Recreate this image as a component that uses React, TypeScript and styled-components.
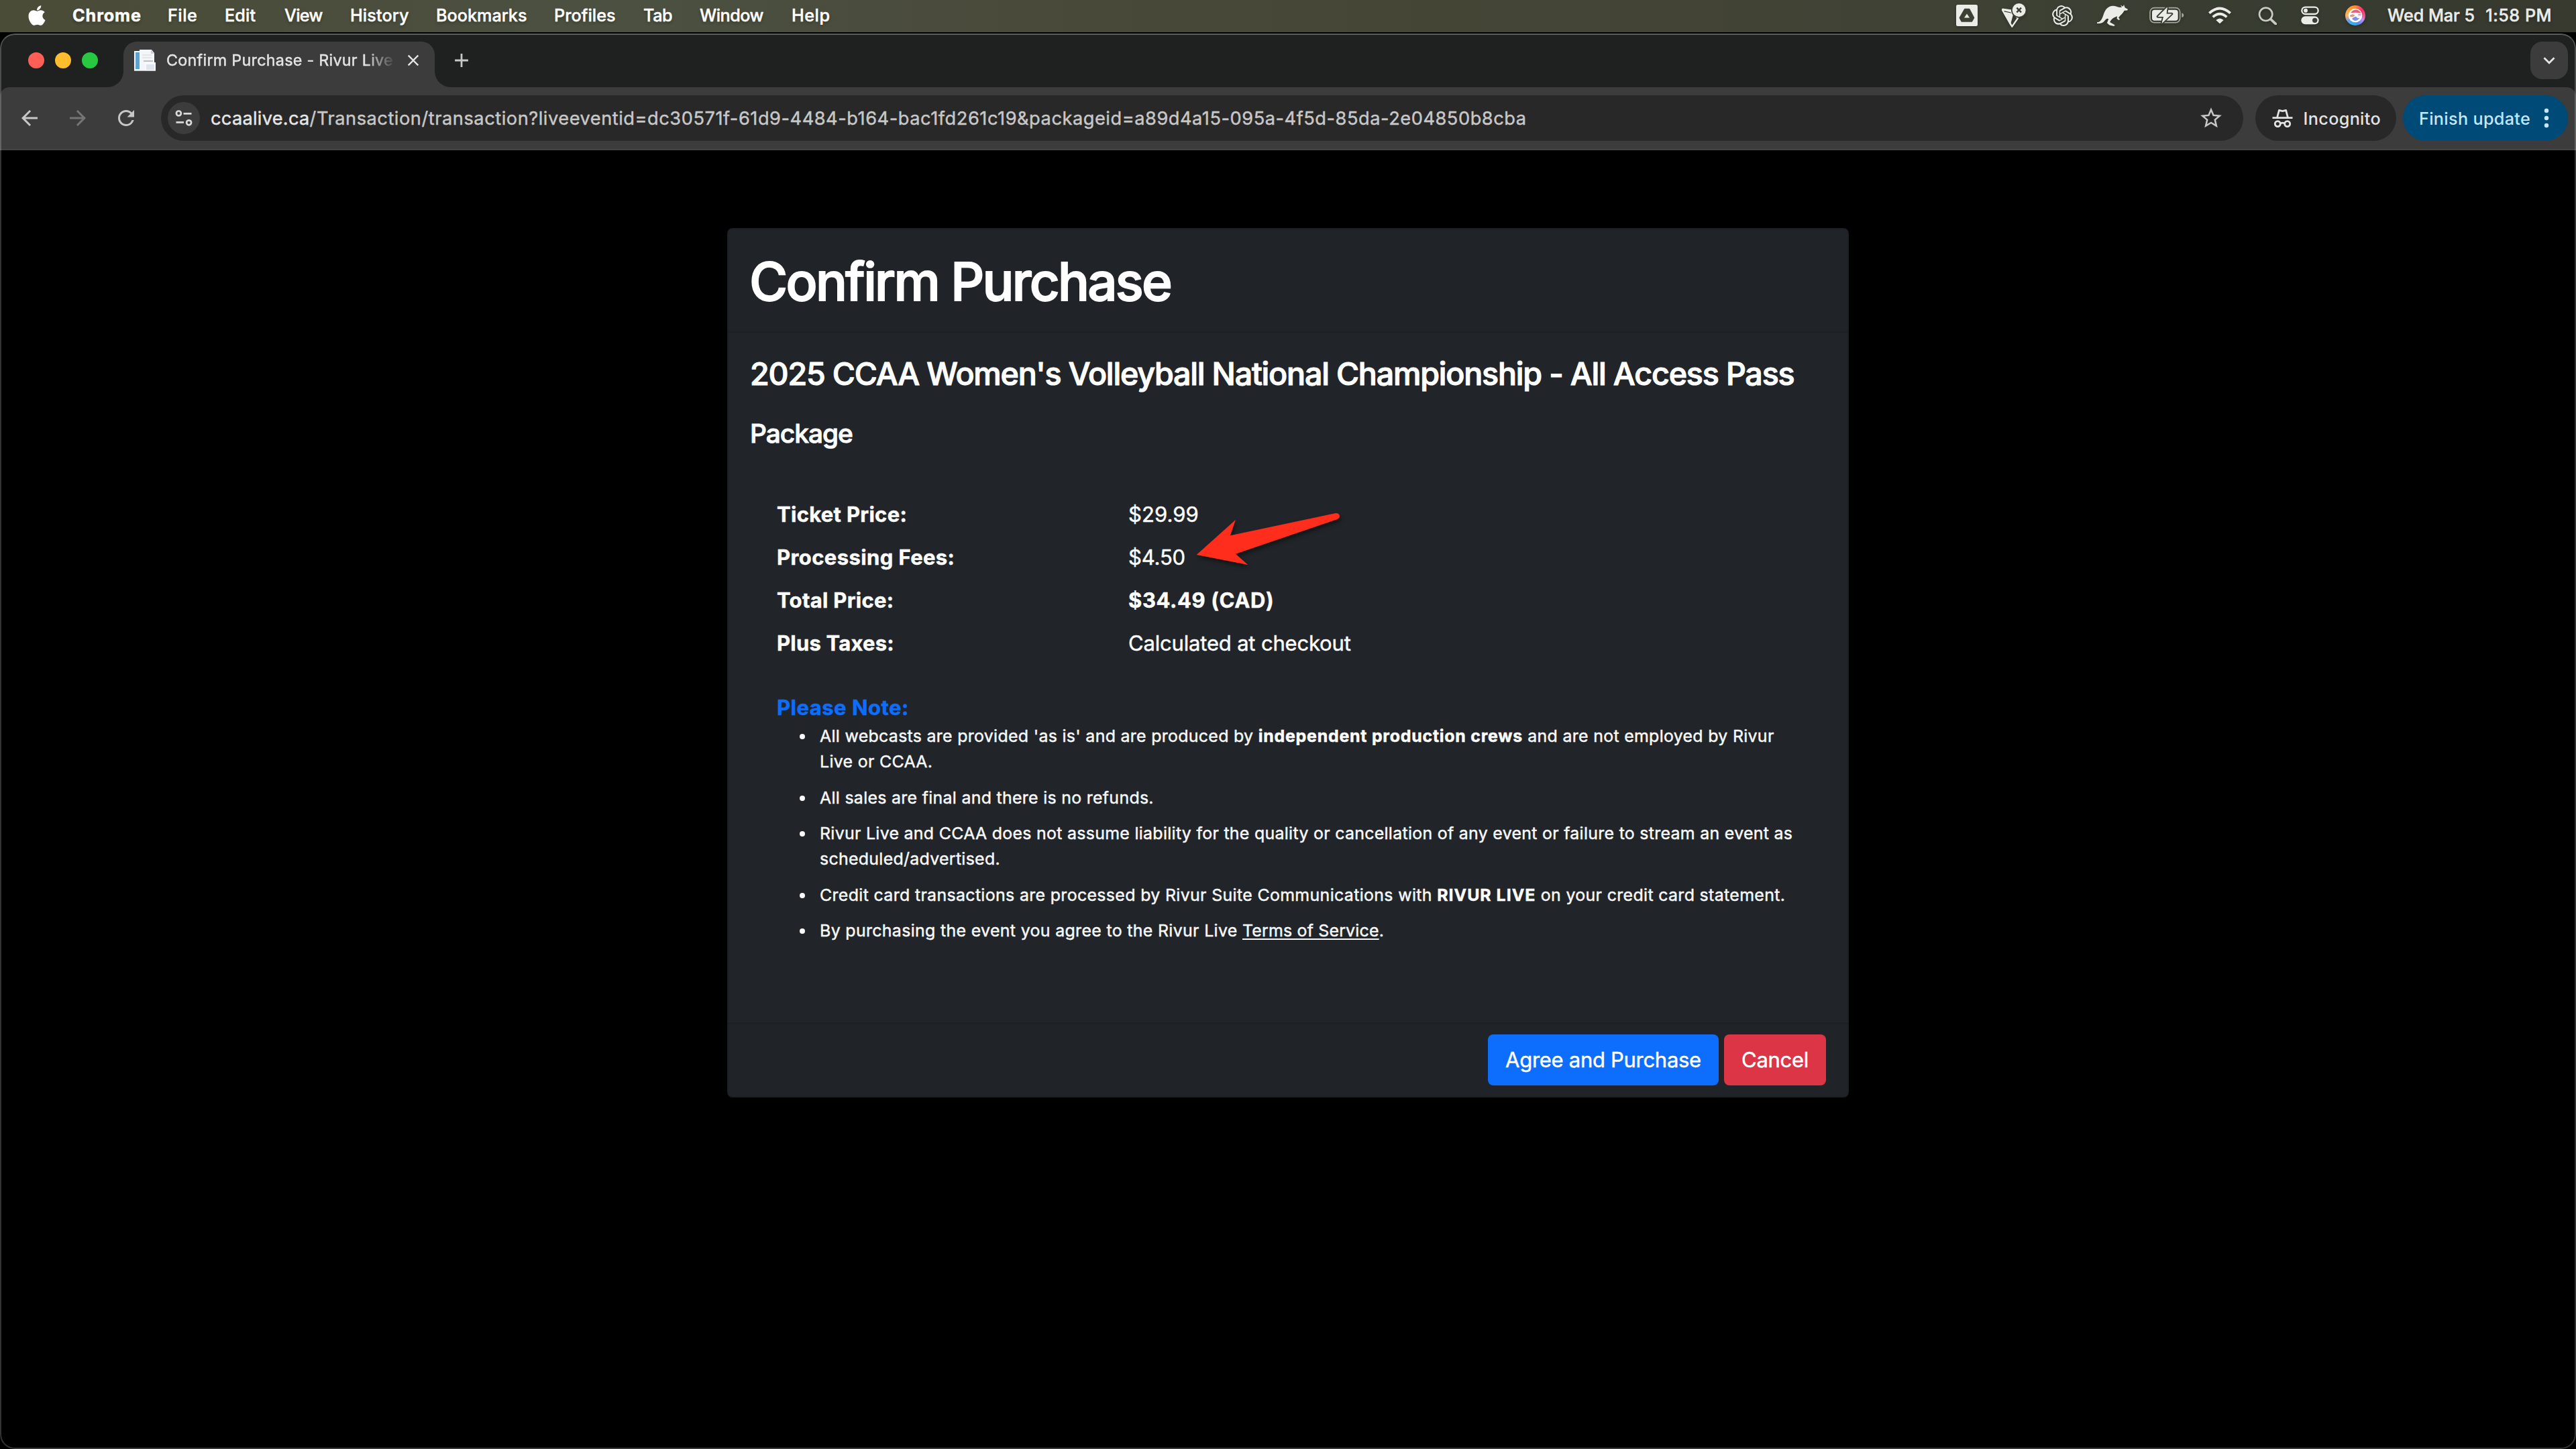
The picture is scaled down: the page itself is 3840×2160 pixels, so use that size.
import React from 'react';
import styled, { createGlobalStyle } from 'styled-components';
import { FaApple } from 'react-icons/fa';
import { SiOpenai } from 'react-icons/si';
import {
  MdAdd,
  MdArrowBack,
  MdArrowForward,
  MdClose,
  MdKeyboardArrowDown,
  MdRefresh,
  MdStarBorder,
} from 'react-icons/md';

const GlobalStyle = createGlobalStyle`
  *, *::before, *::after { box-sizing: border-box; }
  body {
    margin: 0;
    background: #000;
    color: #fff;
    font-family: Inter, "Liberation Sans", sans-serif;
    -webkit-font-smoothing: antialiased;
    -webkit-text-stroke: 0.45px currentColor;
  }
  svg { display: block; flex: none; }
`;

const Screen = styled.div`
  width: 3840px;
  height: 2160px;
  display: flex;
  flex-direction: column;
  background: #000;
  overflow: hidden;
`;

/* ---------- macOS menu bar ---------- */

const MenuBar = styled.header`
  flex: none;
  height: 48px;
  padding: 0 36px 2px 38px;
  display: flex;
  align-items: center;
  justify-content: space-between;
  background: linear-gradient(90deg, #4a4c38 0, #4b4e3d 600px, #4b5142 900px, #4a4a3b 1500px, #454536 2200px, #3f4235 2900px, #373c30 3400px, #38392f 3840px);
  font-size: 25.2px;
  font-weight: 500;
  line-height: 46px;
  color: #fff;
  text-shadow: 0 2px 4px rgba(0, 0, 0, 0.35);
`;

const MenuList = styled.nav`
  display: grid;
  grid-template-columns: 70px 142px 85px 89px 98px 128px 176px 133px 84px 137px auto;
  align-items: center;
  white-space: nowrap;
`;

const MenuItem = styled.span<{ $track?: number; $bold?: boolean }>`
  letter-spacing: ${(p) => p.$track ?? 0}px;
  font-weight: ${(p) => (p.$bold ? 700 : 500)};
`;

const StatusList = styled.div`
  display: flex;
  align-items: center;
  height: 46px;
  color: #ebebe8;
  white-space: nowrap;
`;

const StatusSlot = styled.span<{ $w: number; $gap: number }>`
  width: ${(p) => p.$w}px;
  margin-left: ${(p) => p.$gap}px;
  display: flex;
  justify-content: center;
  filter: drop-shadow(0 2px 2px rgba(0, 0, 0, 0.25));
`;

const Clock = styled.span`
  width: 245px;
  margin-left: 33px;
  display: flex;
  justify-content: space-between;
`;

/* ---------- browser window ---------- */

const Window = styled.div`
  position: relative;
  flex: 1;
  margin-top: 2px;
  display: flex;
  flex-direction: column;
  border-radius: 22px;
  overflow: hidden;
  background: #1f2120;
  &::after {
    content: '';
    position: absolute;
    inset: 0;
    border: 2px solid rgba(255, 255, 255, 0.27);
    border-left-color: rgba(255, 255, 255, 0.2);
    border-right-color: rgba(255, 255, 255, 0.2);
    border-bottom-color: rgba(255, 255, 255, 0.22);
    border-radius: 22px;
    pointer-events: none;
  }
`;

const TabStrip = styled.div`
  flex: none;
  height: 80px;
  padding: 0 12px 0 42px;
  display: flex;
  align-items: center;
`;

const Lights = styled.div`
  display: flex;
  gap: 16px;
`;

const Light = styled.i<{ $color: string }>`
  width: 24px;
  height: 24px;
  border-radius: 50%;
  background: ${(p) => p.$color};
`;

const Tab = styled.div`
  position: relative;
  align-self: flex-end;
  width: 464px;
  height: 68px;
  margin-left: 38px;
  padding: 0 18px 12px 16px;
  display: flex;
  align-items: center;
  background: #3c3c3c;
  border-radius: 20px 20px 0 0;
  &::before,
  &::after {
    content: '';
    position: absolute;
    bottom: 0;
    width: 24px;
    height: 24px;
  }
  &::before {
    left: -24px;
    background: radial-gradient(circle at 0 0, transparent 23.5px, #3c3c3c 24.5px);
  }
  &::after {
    right: -24px;
    background: radial-gradient(circle at 100% 0, transparent 23.5px, #3c3c3c 24.5px);
  }
`;

const TabTitle = styled.span`
  width: 337px;
  margin-left: 16px;
  overflow: hidden;
  white-space: nowrap;
  font-size: 23.3px;
  line-height: 56px;
  letter-spacing: 0.275px;
  color: #e3e3e3;
  mask-image: linear-gradient(90deg, #000 296px, transparent 342px);
`;

const TabClose = styled.span`
  margin-left: auto;
  color: #e3e3e3;
`;

const NewTab = styled.span`
  margin-left: 23px;
  color: #c7c7c7;
`;

const TabSearch = styled.span`
  margin-left: auto;
  width: 56px;
  height: 56px;
  border-radius: 18px;
  background: #3c3c3c;
  color: #e3e3e3;
  display: flex;
  align-items: center;
  justify-content: center;
`;

const Toolbar = styled.div`
  flex: none;
  height: 94px;
  padding: 0 12px 0 26px;
  display: flex;
  align-items: center;
  background: #3c3c3c;
  border-bottom: 2px solid #454545;
  border-radius: 14px 14px 0 0;
`;

const NavButtons = styled.div`
  display: flex;
  gap: 36px;
  color: #c7c7c7;
`;

const NavButton = styled.span<{ $dim?: boolean }>`
  color: ${(p) => (p.$dim ? '#757575' : '#c7c7c7')};
`;

const Omnibox = styled.div`
  flex: none;
  width: 3104px;
  height: 68px;
  margin-left: 34px;
  padding: 0 29px 0 10px;
  display: flex;
  align-items: center;
  border-radius: 34px;
  background: #282828;
`;

const SiteInfo = styled.span`
  width: 48px;
  height: 48px;
  border-radius: 50%;
  background: #3c3c3c;
  display: flex;
  align-items: center;
  justify-content: center;
`;

const Url = styled.span`
  margin-left: 16px;
  flex: 1;
  font-size: 27.2px;
  letter-spacing: 0.545px;
  white-space: nowrap;
  color: #c7c7c7;
`;

const Host = styled.span`
  letter-spacing: 0.274px;
  color: #e6e6e6;
`;

const Chip = styled.span<{ $bg: string; $fg: string; $w: number; $gap: number; $left: number; $right: number }>`
  flex: none;
  width: ${(p) => p.$w}px;
  height: 68px;
  margin-left: ${(p) => p.$gap}px;
  padding: 0 ${(p) => p.$right}px 0 ${(p) => p.$left}px;
  display: flex;
  align-items: center;
  justify-content: space-between;
  border-radius: 34px;
  background: ${(p) => p.$bg};
  color: ${(p) => p.$fg};
  font-size: 25.2px;
  font-weight: 500;
  letter-spacing: 0.33px;
  line-height: 68px;
  white-space: nowrap;
  -webkit-text-stroke: 0;
`;

const ChipLabel = styled.span`
  padding-top: 1px;
`;

/* ---------- page ---------- */

const Page = styled.main`
  flex: 1;
  padding-top: 116px;
  display: flex;
  justify-content: center;
  align-items: flex-start;
  background: #000;
`;

const Card = styled.section`
  width: 1672px;
  height: 1296px;
  display: flex;
  flex-direction: column;
  background: #212529;
  border: 2px solid #1d2023;
  border-radius: 8px;
`;

const CardHeader = styled.div`
  flex: none;
  height: 154px;
  padding: 30px 31px 0;
  background: #202428;
  border-bottom: 2px solid #1d2023;
  border-radius: 6px 6px 0 0;
`;

const CardBody = styled.div`
  flex: 1;
  padding: 32px 31px 0 32px;
`;

const CardFooter = styled.div`
  flex: none;
  height: 110px;
  padding: 16px 32px 0;
  display: flex;
  justify-content: flex-end;
  gap: 8px;
  background: #202428;
  border-top: 2px solid #1d2023;
  border-radius: 0 0 6px 6px;
`;

const Title = styled.h1`
  margin: 0;
  font-size: 78px;
  font-weight: 500;
  line-height: 96px;
  letter-spacing: -2.72px;
  -webkit-text-stroke-width: 1.8px;
`;

const EventName = styled.h4`
  margin: 0 0 36px;
  font-size: 46.6px;
  font-weight: 500;
  line-height: 58px;
  letter-spacing: -1.2px;
  white-space: nowrap;
  -webkit-text-stroke-width: 1.1px;
`;

const PackageName = styled.h5`
  margin: 0 0 65px;
  font-size: 38.8px;
  font-weight: 500;
  line-height: 48px;
  letter-spacing: -0.98px;
  -webkit-text-stroke-width: 0.9px;
`;

const Details = styled.div`
  padding-left: 40px;
  font-size: 31px;
`;

const PriceRow = styled.div`
  display: grid;
  grid-template-columns: 524px 1fr;
  line-height: 64px;
`;

const PriceLabel = styled.span<{ $track: number }>`
  font-weight: 700;
  letter-spacing: ${(p) => p.$track}px;
`;

const PriceValue = styled.span<{ $bold?: boolean; $track: number }>`
  font-weight: ${(p) => (p.$bold ? 700 : 400)};
  letter-spacing: ${(p) => p.$track}px;
`;

const NoteHeading = styled.div`
  margin-top: 40px;
  font-weight: 700;
  line-height: 47px;
  letter-spacing: 0.5px;
  color: #0d6efd;
`;

const Notes = styled.ul`
  margin: 0;
  padding: 0;
  list-style: none;
  font-size: 24.9px;
  line-height: 38.4px;
  color: #f8f9fa;
`;

const Note = styled.li<{ $track?: number }>`
  display: flex;
  margin-bottom: 14.9px;
  padding-left: 34px;
  letter-spacing: ${(p) => p.$track ?? 0.3}px;
  &::before {
    content: '';
    flex: none;
    width: 8px;
    height: 8px;
    margin: 16px 22px 0 0;
    border-radius: 50%;
    background: #f8f9fa;
  }
`;

const NoteText = styled.span`
  width: 1462px;
`;

const Strong = styled.b<{ $track: number }>`
  font-weight: 700;
  letter-spacing: ${(p) => p.$track}px;
  color: #fff;
`;

const TermsLink = styled.a`
  letter-spacing: 0.2px;
  text-decoration: underline;
  text-decoration-thickness: 2px;
  text-underline-offset: 3px;
  text-decoration-skip-ink: none;
`;

const Button = styled.button<{ $bg: string; $w: number }>`
  width: ${(p) => p.$w}px;
  height: 76px;
  padding: 0;
  border: 0;
  border-radius: 8px;
  background: ${(p) => p.$bg};
  color: #fff;
  font: 400 31px/76px Inter, 'Liberation Sans', sans-serif;
  letter-spacing: -0.29px;
  text-align: center;
  white-space: nowrap;
`;

const ArrowAnchor = styled.span`
  position: relative;
`;

const ArrowMark = styled.svg`
  position: absolute;
  left: 88px;
  top: -59px;
  overflow: visible;
  filter: drop-shadow(2px 4px 3px rgba(0, 0, 0, 0.45));
`;

/* ---------- icons ---------- */

const DriveIcon = () => (
  <svg width="32" height="32" viewBox="0 0 32 32">
    <rect width="32" height="32" rx="2.5" fill="#ebebe8" />
    <path d="M13 7h6.4L26 19.5 23.2 24.5H8.4L5.8 19.5Z" fill="#3d4034" stroke="#3d4034" strokeWidth="2.4" strokeLinejoin="round" />
    <path d="M16 13.6l4 6h-8Z" fill="#ebebe8" />
  </svg>
);

const PointerOffIcon = () => (
  <svg width="36" height="36" viewBox="0 0 108 108">
    <path d="M2 28L40 36L72 66L46 104Z" fill="none" stroke="#ebebe8" strokeWidth="7" strokeLinejoin="round" />
    <path d="M4 36L52 46L38 98Z" fill="#ebebe8" />
    <path d="M2 26L46 32" stroke="#ebebe8" strokeWidth="7" />
    <circle cx="77" cy="30" r="35" fill="#3d4034" />
    <circle cx="77" cy="30" r="30" fill="#ebebe8" />
    <path d="M67 20l20 20M87 20L67 40" stroke="#3d4034" strokeWidth="7.5" />
  </svg>
);

const KangarooIcon = () => (
  <svg width="46" height="32" viewBox="0 0 139 96">
    <path
      fill="#ebebe8"
      d="M0 79C14 80 22 66 28 48C36 20 50 6 72 5C84 5 93 11 102 12L112 11L105 1L117 8L121 0L126 13L139 20L136 25L123 26C118 36 112 42 106 47L97 58L103 66L98 69L89 62L91 52L80 56C70 60 62 68 58 78L80 91L77 96L56 92L45 82L52 64C46 60 42 62 36 70C27 82 16 86 0 84Z"
    />
  </svg>
);

const BatteryIcon = () => (
  <svg width="52" height="26" viewBox="0 0 156 78">
    <rect x="3" y="5" width="134" height="66" rx="19" fill="none" stroke="#a8a9a0" strokeWidth="5" />
    <path d="M145 28v20q9-3 9-10t-9-10Z" fill="#a8a9a0" />
    <rect x="12" y="14" width="116" height="48" rx="11" fill="#ebebe8" />
    <path d="M80 2L38 44h26L56 74l44-42H76Z" fill="#ebebe8" stroke="#3b4033" strokeWidth="12" strokeLinejoin="round" paintOrder="stroke" />
    <path d="M80 2L38 44h26L56 74l44-42H76Z" fill="#ebebe8" />
  </svg>
);

const WifiIcon = () => (
  <svg width="34" height="26" viewBox="0 0 102 78" fill="none" stroke="#ebebe8" strokeWidth="11.5">
    <path d="M4 29Q51-14 98 29" />
    <path d="M20 46Q51 18 82 46" />
    <path d="M51 76L34 60Q51 45 68 60Z" fill="#ebebe8" stroke="none" />
  </svg>
);

const SearchIcon = () => (
  <svg width="28" height="28" viewBox="0 0 84 84" fill="none" stroke="#c9cac4">
    <circle cx="35" cy="37" r="29" strokeWidth="8" />
    <path d="M56 58L79 80" strokeWidth="11" strokeLinecap="round" />
  </svg>
);

const ControlCenterIcon = () => (
  <svg width="27" height="28" viewBox="0 0 81 84">
    <rect x="4" y="5" width="73" height="31" rx="15.5" fill="none" stroke="#ebebe8" strokeWidth="7" />
    <circle cx="21" cy="20.5" r="9" fill="#ebebe8" />
    <rect x="1" y="46" width="79" height="36" rx="18" fill="#ebebe8" />
    <circle cx="62" cy="64" r="11" fill="#3a3f33" />
  </svg>
);

const Orb = styled.span`
  width: 30px;
  height: 30px;
  border-radius: 50%;
  background: conic-gradient(#ff8a3d, #ff2d6b 50deg, #f0508c 90deg, #c48cff 120deg, #4f8cf0 160deg, #28b4f5 200deg, #7c9be0 235deg, #ffb46a 270deg, #ffa02e 320deg, #ff8a3d);
`;

const AssistantIcon = () => (
  <Orb>
    <svg width="30" height="30" viewBox="0 0 90 90">
      <circle cx="45" cy="45" r="31" fill="#fff" />
      <path d="M24 34Q34 17 54 20Q68 26 70 36Q50 30 24 34Z" fill="#e8607c" />
      <path d="M21 44Q30 34 44 44Q34 56 22 50Z" fill="#d99a86" />
      <path d="M30 60Q44 44 66 52Q60 68 44 69Q36 68 30 60Z" fill="#7f92e8" />
      <path d="M22 40Q46 30 50 45T70 50" fill="none" stroke="#fff" strokeWidth="6" />
      <path d="M58 42h13" stroke="#f07ac0" strokeWidth="5" />
    </svg>
  </Orb>
);

const Favicon = () => (
  <svg width="32" height="32" viewBox="0 0 32 32">
    <rect x="0" y="2" width="22" height="29" fill="#f4f8fb" />
    <rect x="2" y="4" width="6" height="25" fill="#5ba3d3" />
    <path d="M8 0H26L30 5V31H8Z" fill="#f3f5f9" />
    <path d="M25 0L30 6H25Z" fill="#c9ced6" />
    <path d="M12 8h14M12 12h14" stroke="#dde2ea" strokeWidth="1.6" />
    <path d="M14 17h14" stroke="#a9adb4" strokeWidth="1.6" />
    <rect x="16" y="19" width="16" height="13" fill="#f8f9fc" />
    <rect x="18" y="22" width="12" height="8" fill="#dfe4f0" />
    <path d="M0 31.5H32" stroke="#b7bcc4" strokeWidth="1" />
  </svg>
);

const TuneIcon = () => (
  <svg width="26" height="26" viewBox="0 0 26 26" fill="none" stroke="#dadada" strokeWidth="2.7">
    <circle cx="5.4" cy="6" r="3.5" />
    <path d="M12.5 6.4H24.5M1.5 19.4H13" />
    <circle cx="20.6" cy="19.8" r="3.5" />
  </svg>
);

const IncognitoIcon = () => (
  <svg width="31" height="29" viewBox="0 0 31 29" fill="none" stroke="#e3e3e3" strokeWidth="2.8">
    <path d="M7.6 13L10.4 2.4L15.5 3.6L20.6 2.4L23.4 13" strokeLinejoin="round" />
    <path d="M0.5 13.6H30.5" />
    <circle cx="8.3" cy="22.6" r="4" />
    <circle cx="22.7" cy="22.6" r="4" />
    <path d="M12.3 22Q15.5 20.2 18.7 22" />
  </svg>
);

const DotsIcon = () => (
  <svg width="8" height="30" viewBox="0 0 8 30" fill="#c2e7ff">
    <circle cx="4" cy="4" r="3.2" />
    <circle cx="4" cy="15" r="3.2" />
    <circle cx="4" cy="26" r="3.2" />
  </svg>
);

/* ---------- data ---------- */

const menus: { label: string; track: number; bold?: boolean }[] = [
  { label: 'Chrome', track: 0.92, bold: true },
  { label: 'File', track: 0.49 },
  { label: 'Edit', track: 0.13 },
  { label: 'View', track: -0.69 },
  { label: 'History', track: 0.11 },
  { label: 'Bookmarks', track: 0 },
  { label: 'Profiles', track: 0.04 },
  { label: 'Tab', track: -0.45 },
  { label: 'Window', track: -0.52 },
  { label: 'Help', track: 0.53 },
];

const prices: {
  label: string;
  labelTrack: number;
  value: string;
  track: number;
  bold?: boolean;
  marked?: boolean;
}[] = [
  { label: 'Ticket Price:', labelTrack: 0.3, value: '$29.99', track: 0.05 },
  { label: 'Processing Fees:', labelTrack: 0.4, value: '$4.50', track: -0.15, marked: true },
  { label: 'Total Price:', labelTrack: 0.3, value: '$34.49 (CAD)', track: 0.6, bold: true },
  { label: 'Plus Taxes:', labelTrack: 0.22, value: 'Calculated at checkout', track: -0.18 },
];

export default function App() {
  return (
    <Screen>
      <GlobalStyle />
      <MenuBar>
        <MenuList>
          <FaApple size={34} />
          {menus.map((m) => (
            <MenuItem key={m.label} $track={m.track} $bold={m.bold}>
              {m.label}
            </MenuItem>
          ))}
        </MenuList>
        <StatusList>
          <StatusSlot $w={32} $gap={0}><DriveIcon /></StatusSlot>
          <StatusSlot $w={36} $gap={36}><PointerOffIcon /></StatusSlot>
          <StatusSlot $w={31} $gap={39}><SiOpenai size={31} /></StatusSlot>
          <StatusSlot $w={46} $gap={36}><KangarooIcon /></StatusSlot>
          <StatusSlot $w={52} $gap={32}><BatteryIcon /></StatusSlot>
          <StatusSlot $w={34} $gap={36}><WifiIcon /></StatusSlot>
          <StatusSlot $w={28} $gap={40}><SearchIcon /></StatusSlot>
          <StatusSlot $w={27} $gap={36}><ControlCenterIcon /></StatusSlot>
          <StatusSlot $w={30} $gap={39}><AssistantIcon /></StatusSlot>
          <Clock>
            <MenuItem $track={-0.04}>Wed Mar 5</MenuItem>
            <MenuItem $track={0.48}>1:58 PM</MenuItem>
          </Clock>
        </StatusList>
      </MenuBar>

      <Window>
        <TabStrip>
          <Lights>
            <Light $color="#ff5f57" />
            <Light $color="#febc2e" />
            <Light $color="#28c840" />
          </Lights>
          <Tab>
            <Favicon />
            <TabTitle>Confirm Purchase - Rivur Live</TabTitle>
            <TabClose><MdClose size={28} /></TabClose>
          </Tab>
          <NewTab><MdAdd size={34} /></NewTab>
          <TabSearch><MdKeyboardArrowDown size={34} /></TabSearch>
        </TabStrip>

        <Toolbar>
          <NavButtons>
            <NavButton><MdArrowBack size={36} /></NavButton>
            <NavButton $dim><MdArrowForward size={36} /></NavButton>
            <NavButton><MdRefresh size={36} /></NavButton>
          </NavButtons>
          <Omnibox>
            <SiteInfo><TuneIcon /></SiteInfo>
            <Url>
              <Host>ccaalive.ca</Host>
              /Transaction/transaction?liveeventid=dc30571f-61d9-4484-b164-bac1fd261c19&amp;packageid=a89d4a15-095a-4f5d-85da-2e04850b8cba
            </Url>
            <MdStarBorder size={38} color="#c7c7c7" />
          </Omnibox>
          <Chip $bg="#282828" $fg="#e3e3e3" $w={210} $gap={18} $left={25} $right={23}>
            <IncognitoIcon />
            <ChipLabel>Incognito</ChipLabel>
          </Chip>
          <Chip $bg="#004a77" $fg="#c2e7ff" $w={246} $gap={10} $left={24} $right={28}>
            <ChipLabel>Finish update</ChipLabel>
            <DotsIcon />
          </Chip>
        </Toolbar>

        <Page>
          <Card>
            <CardHeader>
              <Title>Confirm Purchase</Title>
            </CardHeader>
            <CardBody>
              <EventName>2025 CCAA Women's Volleyball National Championship - All Access Pass</EventName>
              <PackageName>Package</PackageName>
              <Details>
                {prices.map((p) => (
                  <PriceRow key={p.label}>
                    <PriceLabel $track={p.labelTrack}>{p.label}</PriceLabel>
                    <ArrowAnchor>
                      <PriceValue $bold={p.bold} $track={p.track}>{p.value}</PriceValue>
                      {p.marked && (
                        <ArrowMark width="300" height="130" viewBox="0 0 900 390">
                          <path
                            d="M41 261L216 104L192 175L663 75Q679 74 681 88Q681 97 671 102L216 257L271 306Z"
                            fill="#ff2d1b"
                          />
                        </ArrowMark>
                      )}
                    </ArrowAnchor>
                  </PriceRow>
                ))}
                <NoteHeading>Please Note:</NoteHeading>
                <Notes>
                  <Note $track={0.31}>
                    <NoteText>
                      All webcasts are provided 'as is' and are produced by{' '}
                      <Strong $track={0.78}>independent production crews</Strong> and are not employed by Rivur Live or CCAA.
                    </NoteText>
                  </Note>
                  <Note>
                    <NoteText>All sales are final and there is no refunds.</NoteText>
                  </Note>
                  <Note>
                    <NoteText>
                      Rivur Live and CCAA does not assume liability for the quality or cancellation of any event or
                      failure to stream an event as scheduled/advertised.
                    </NoteText>
                  </Note>
                  <Note $track={0.35}>
                    <NoteText>
                      Credit card transactions are processed by Rivur Suite Communications with{' '}
                      <Strong $track={1}>RIVUR LIVE</Strong> on your credit card statement.
                    </NoteText>
                  </Note>
                  <Note $track={0.34}>
                    <NoteText>
                      By purchasing the event you agree to the Rivur Live <TermsLink>Terms of Service</TermsLink>.
                    </NoteText>
                  </Note>
                </Notes>
              </Details>
            </CardBody>
            <CardFooter>
              <Button $bg="#0d6efd" $w={344}>Agree and Purchase</Button>
              <Button $bg="#dc3545" $w={152}>Cancel</Button>
            </CardFooter>
          </Card>
        </Page>
      </Window>
    </Screen>
  );
}
